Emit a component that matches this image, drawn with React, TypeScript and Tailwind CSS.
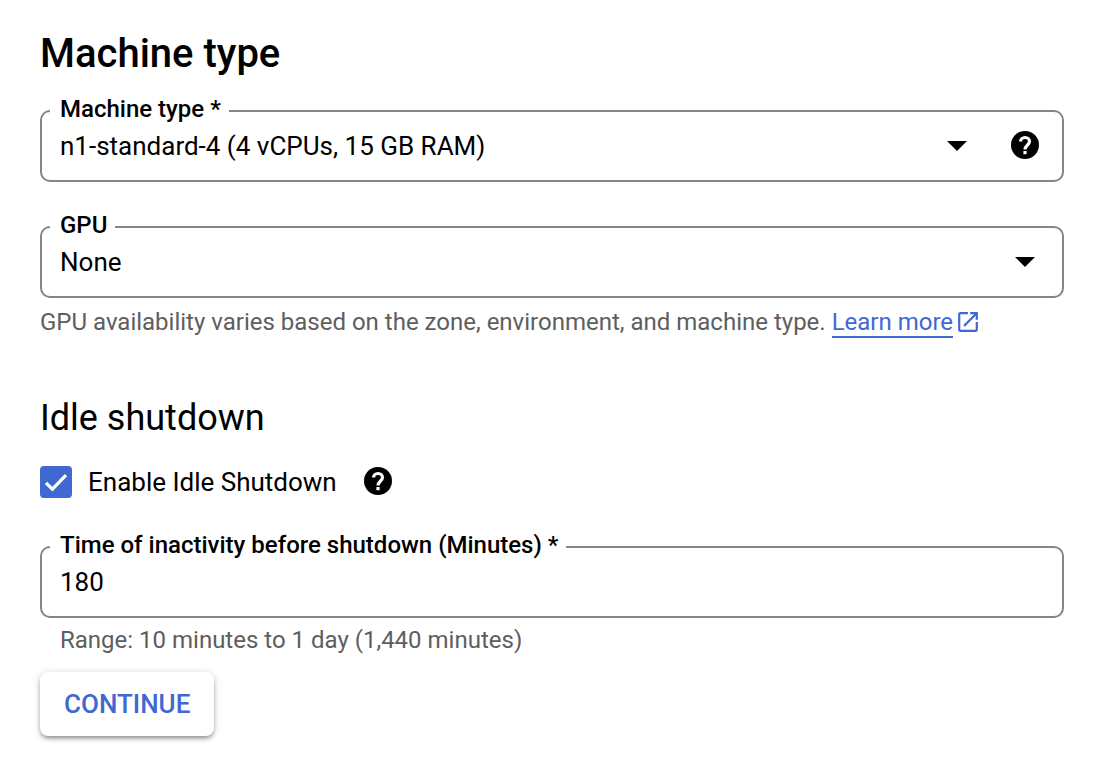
import { useState, type ReactNode } from "react";

export default function App() {
  const [idle, setIdle] = useState(true);

  return (
    <form
      className="bg-white pt-[30px] pr-[42px] pb-8 pl-10 font-['Roboto',sans-serif] text-[26px] text-black"
      onSubmit={(e) => e.preventDefault()}
    >
      <h1 className="text-[40px] leading-12 font-medium">Machine type</h1>

      <Field id="machine-type" label="Machine type *" className="mt-8">
        <select id="machine-type" className="h-full min-w-0 flex-1 appearance-none bg-transparent pl-[18px] outline-none">
          <option>n1-standard-4 (4 vCPUs, 15 GB RAM)</option>
        </select>
        <Arrow />
        <HelpButton className="mr-[23px] ml-11" />
      </Field>

      <Field id="gpu" label="GPU" className="mt-11">
        <select id="gpu" className="h-full min-w-0 flex-1 appearance-none bg-transparent pl-[18px] outline-none">
          <option>None</option>
        </select>
        <Arrow />
        <span className="w-[27px]" />
      </Field>
      <p className="mt-2 text-2xl leading-8 text-[#5e5e5e]">
        GPU availability varies based on the zone, environment, and machine type.{" "}
        <a href="#gpu-docs" className="text-[#4068d2]">
          <span className="border-b-2 border-[#4068d2]">Learn more</span>
          <LaunchIcon />
        </a>
      </p>

      <h2 className="mt-14 text-4xl leading-12">Idle shutdown</h2>
      <div className="mt-6 flex items-center">
        <label className="flex h-8 items-center gap-4">
          <span className="relative flex size-8">
            <input
              type="checkbox"
              checked={idle}
              onChange={(e) => setIdle(e.target.checked)}
              className="peer size-8 appearance-none rounded-sm border-4 border-[#80868b] checked:border-[#4068d2] checked:bg-[#4068d2]"
            />
            <svg
              viewBox="0 0 32 32"
              className="pointer-events-none absolute inset-0 hidden size-8 peer-checked:block"
              fill="none"
              stroke="#fff"
              strokeWidth="3.2"
            >
              <path d="M6 16.8l6.400 6.400L26 9.200" />
            </svg>
          </span>
          Enable Idle Shutdown
        </label>
        <HelpButton className="ml-[27px]" />
      </div>

      <Field id="idle-minutes" label="Time of inactivity before shutdown (Minutes) *" className="mt-12">
        <input
          id="idle-minutes"
          type="text"
          inputMode="numeric"
          defaultValue="180"
          className="h-full min-w-0 flex-1 bg-transparent px-[18px] outline-none"
        />
      </Field>
      <p className="mt-1.5 pl-5 text-2xl leading-8 text-[#5e5e5e]">Range: 10 minutes to 1 day (1,440 minutes)</p>

      <button
        type="submit"
        className="mt-4 h-16 rounded-lg bg-white px-6 font-medium text-[#4068d2] shadow-[0_3px_4px_-1px_rgba(0,0,0,0.4),0_1px_8px_rgba(0,0,0,0.16)]"
      >
        CONTINUE
      </button>
    </form>
  );
}

function Field({ id, label, className, children }: { id: string; label: string; className: string; children: ReactNode }) {
  return (
    <div className={`relative flex h-18 items-center rounded-[10px] border-2 border-[#80868b] ${className}`}>
      {/* label cuts a notch in the top border */}
      <label htmlFor={id} className="absolute -top-[19px] left-2 bg-white pr-2 pl-2.5 text-2xl leading-8 font-medium">
        {label}
      </label>
      {children}
    </div>
  );
}

function Arrow() {
  return (
    <svg viewBox="0 0 20 10" className="pointer-events-none h-2.5 w-5">
      <path d="M0 0h20L10 10z" />
    </svg>
  );
}

function HelpButton({ className }: { className: string }) {
  return (
    <button type="button" aria-label="Help" className={`h-[30px] w-7 pb-0.5 ${className}`}>
      <svg viewBox="0 0 28 28" className="size-7">
        <circle cx="14" cy="14" r="14" />
        <path
          d="M9.600 10.600a4.450 4.100 0 0 1 8.900 0c0 3.300-4.450 3.600-4.450 8"
          fill="none"
          stroke="#fff"
          strokeWidth="3.2"
        />
        <path d="M12.400 20h3.200v3.200h-3.200z" fill="#fff" />
      </svg>
    </button>
  );
}

function LaunchIcon() {
  return (
    <svg viewBox="2 2 20 20" fill="currentColor" className="ml-1 inline size-[22px] align-[-3px]">
      <path d="M19 19H5V5h7V3H5c-1.110 0-2 .9-2 2v14c0 1.100.890 2 2 2h14c1.100 0 2-.9 2-2v-7h-2v7zM14 3v2h3.590l-9.830 9.830 1.410 1.410L19 6.410V10h2V3h-7z" />
    </svg>
  );
}
